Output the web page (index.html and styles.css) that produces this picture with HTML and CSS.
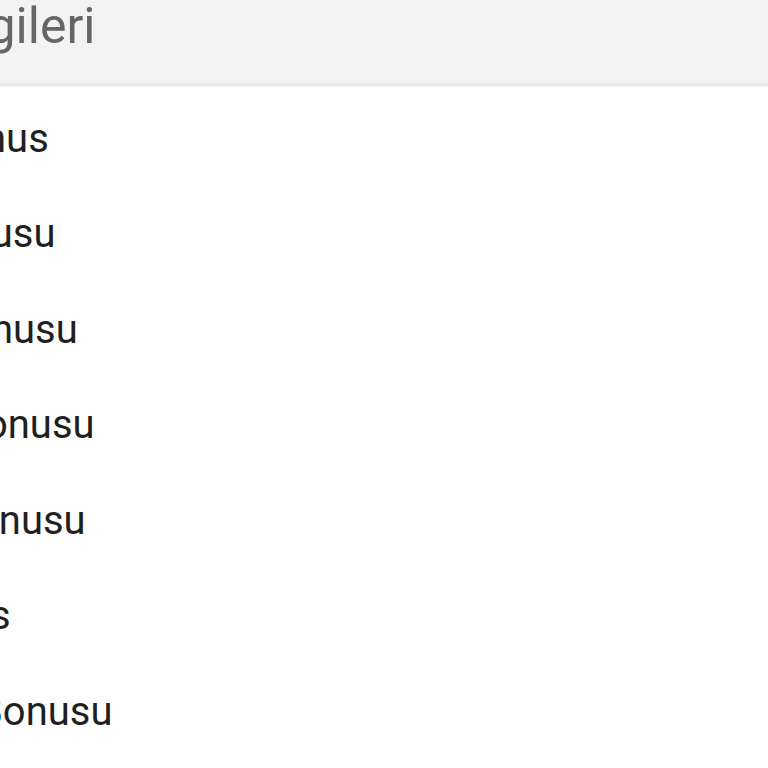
FILE: index.html
```html
<!DOCTYPE html>
<html lang="tr">
<head>
    <meta charset="UTF-8">
    <meta name="viewport" content="width=device-width, initial-scale=1.0">
    <title>Bonus Bilgileri</title>
    <link rel="stylesheet" href="styles.css">
</head>
<body>

    <div class="screen">
        <!-- Top bar -->
        <header class="title-bar">
            <h1>Bonus Bilgileri</h1>
        </header>

        <!-- Bonus list -->
        <ul class="bonus-list">
            <li class="bonus-item">Spor Kayıp Bonus</li>
            <li class="bonus-item">Çevrimsiz Bonusu</li>
            <li class="bonus-item">Canlı Kayıp Bonusu</li>
            <li class="bonus-item">Kripto Kayıp Bonusu</li>
            <li class="bonus-item">Slot Yatırım Bonusu</li>
            <li class="bonus-item">Freespin Bonus</li>
            <li class="bonus-item">Doğum Günü Bonusu</li>
        </ul>
    </div>

</body>
</html>
```

FILE: styles.css
```css
html, body {
    margin: 0;
    padding: 0;
    height: 100%;
    overflow: hidden;
    background: #fff;
}
body {
    font-family: Roboto, "Noto Sans", Arial, sans-serif;
}
.screen {
    margin-left: -300px;
    width: 1068px;
}
.title-bar {
    box-sizing: border-box;
    height: 86px;
    padding: 1px 0 0 79px;
    background: #f3f3f3;
    border-bottom: 3px solid #e7e7e7;
    box-shadow: 0 1px 1px rgba(0, 0, 0, 0.04);
}
.title-bar h1 {
    margin: 0;
    font-size: 50px;
    font-weight: 400;
    line-height: 50px;
    color: #666; /* muted title */
}
.bonus-list {
    list-style: none;
    margin: 0;
    padding: 4.5px 0 0 0;
}
.bonus-item {
    height: 95.5px;
    line-height: 95.5px;
    padding-left: 36px;
    font-size: 40px;
    color: #1f1f1f;
    white-space: nowrap;
}
```
